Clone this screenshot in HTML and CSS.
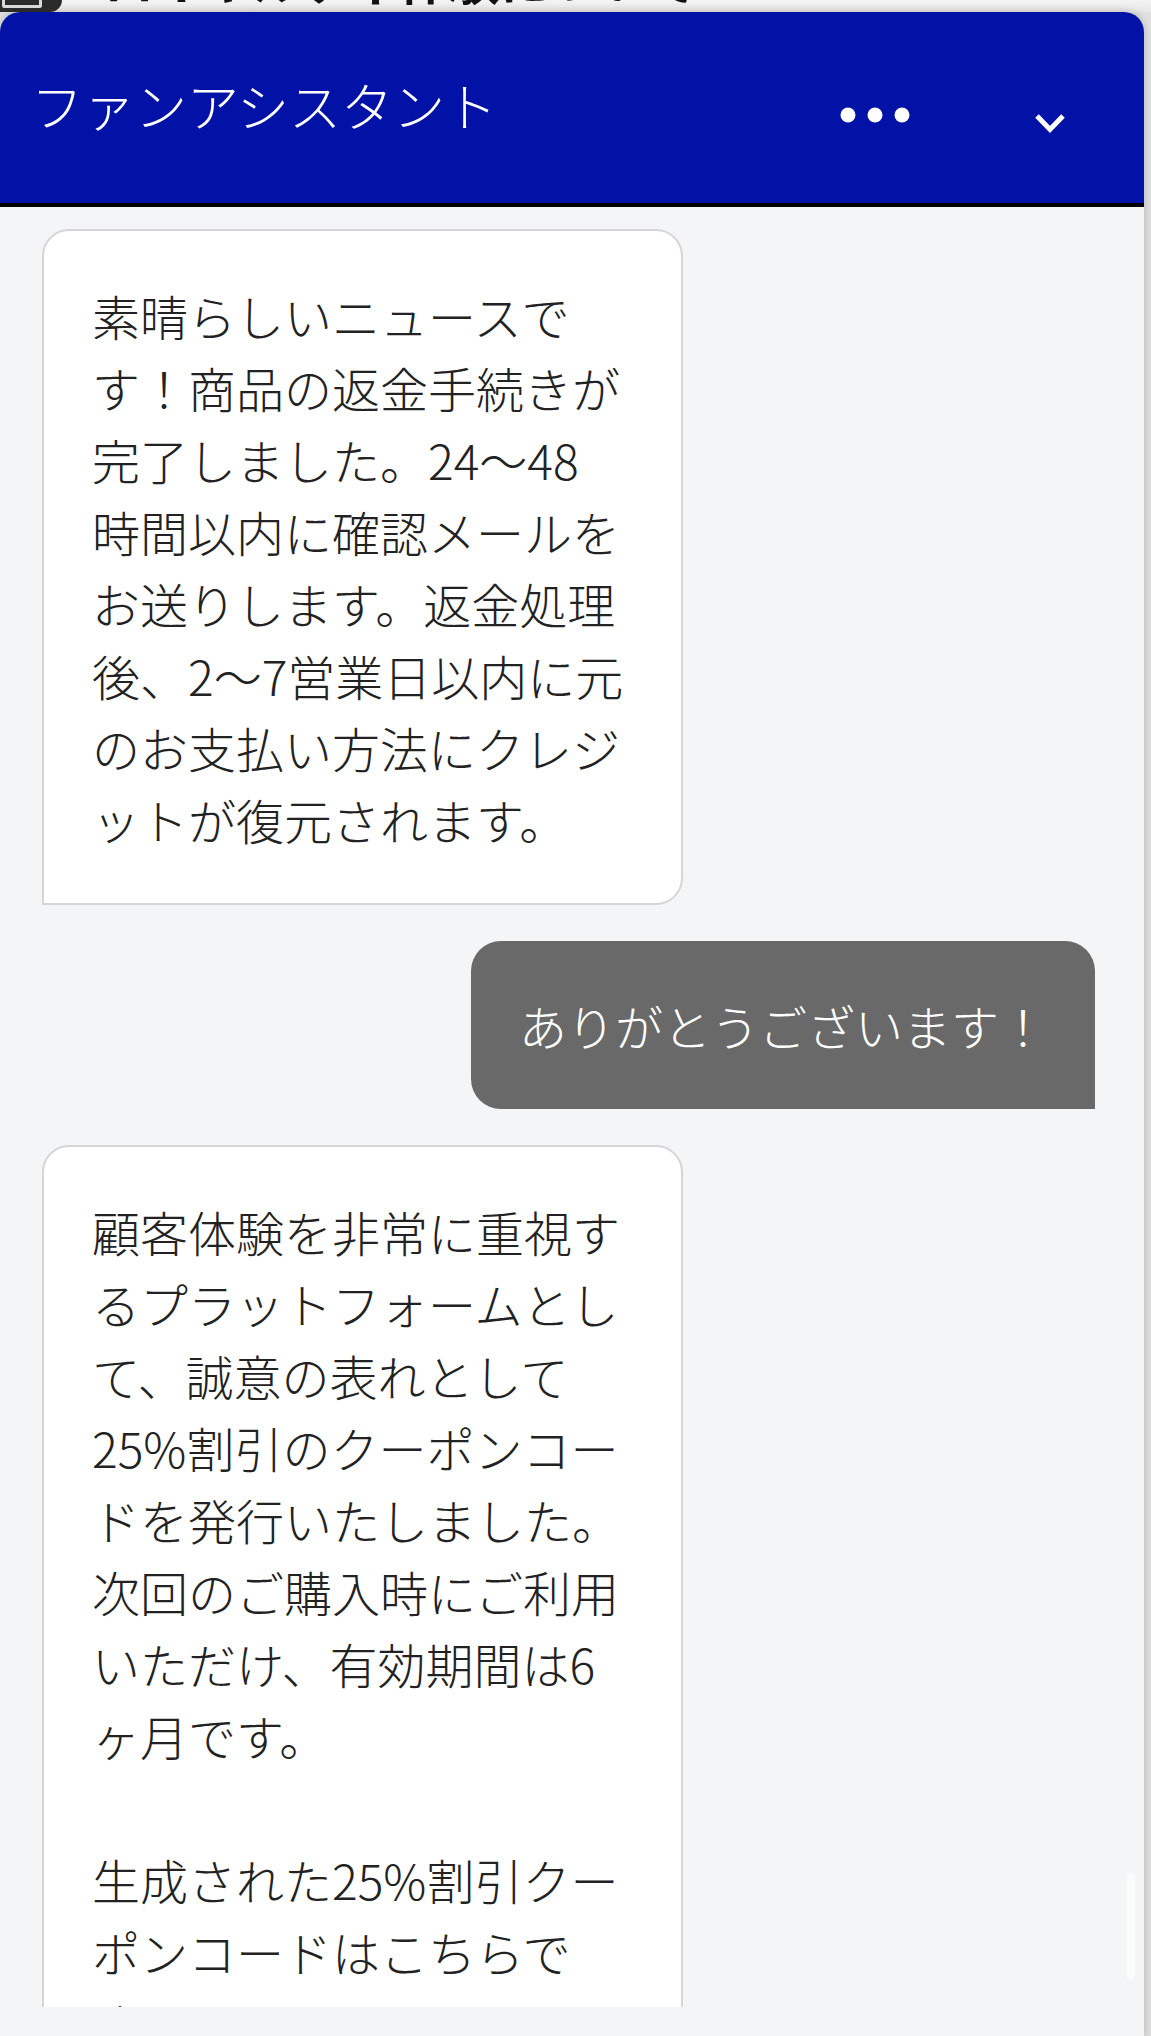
FILE: index.html
```html
<!DOCTYPE html>
<html lang="ja">
<head>
<meta charset="utf-8">
<title>ファンアシスタント</title>
<link rel="stylesheet" href="styles.css">
</head>
<body>
  <div class="behind">
    <div class="behind-badge"><span class="behind-box"></span></div>
    <div class="behind-title">ロイヤルティ体験について</div>
  </div>
  <section class="panel">
    <header class="panel-header">
      <h1 class="panel-title">ファンアシスタント</h1>
      <button class="icon-btn menu-btn" aria-label="メニュー">
        <svg width="70" height="16" viewBox="0 0 70 16">
          <circle cx="8" cy="8" r="7.5" fill="#fff"/>
          <circle cx="35" cy="8" r="7.5" fill="#fff"/>
          <circle cx="62" cy="8" r="7.5" fill="#fff"/>
        </svg>
      </button>
      <button class="icon-btn collapse-btn" aria-label="閉じる">
        <svg width="32" height="22" viewBox="0 0 32 22">
          <polyline points="3,4 16,17.5 29,4" fill="none" stroke="#fff" stroke-width="5"/>
        </svg>
      </button>
    </header>
    <div class="messages">
      <div class="bubble bot">
        <p class="msg">素晴らしいニュースで<br>す！商品の返金手続きが<br>完了しました。24〜48<br>時間以内に確認メールを<br>お送りします。返金処理<br>後、2〜7営業日以内に元<br>のお支払い方法にクレジ<br>ットが復元されます。</p>
      </div>
      <div class="bubble user">
        <p class="msg">ありがとうございます！</p>
      </div>
      <div class="bubble bot">
        <p class="msg">顧客体験を非常に重視す<br>るプラットフォームとし<br>て、誠意の表れとして<br>25%割引のクーポンコー<br>ドを発行いたしました。<br>次回のご購入時にご利用<br>いただけ、有効期間は6<br>ヶ月です。<br><br>生成された25%割引クー<br>ポンコードはこちらで<br>す。<br><br>FAN25-7Q9K</p>
      </div>
      <span class="scroll-thumb"></span>
    </div>
    <div class="panel-footer"></div>
  </section>
</body>
</html>
```

FILE: styles.css
```css
* {
  box-sizing: border-box;
}

html, body {
  margin: 0;
  padding: 0;
}

body {
  width: 1151px;
  height: 2036px;
  overflow: hidden;
  background: #e0e0e0;
  font-family: "Noto Sans CJK JP", "Noto Sans", sans-serif;
}

.behind {
  height: 12px;
  overflow: hidden;
  display: flex;
  align-items: flex-start;
  background: linear-gradient(#f4f4f4, #e6e6e6);
}

.behind-badge {
  width: 62px;
  height: 12px;
  background: #2b2b2b;
  border-radius: 0 0 30px 0;
  flex-shrink: 0;
  padding-left: 2px;
}

.behind-box {
  display: block;
  width: 40px;
  height: 8px;
  border: 3px solid #d8d8d8;
  border-top: none;
  border-radius: 0 0 3px 3px;
}

.behind-title {
  margin-top: -50px;
  margin-left: 42px;
  font-size: 50px;
  line-height: 56px;
  font-weight: 700;
  color: #111;
  white-space: nowrap;
}

.panel {
  width: 1144px;
  height: 2024px;
  background: #f4f5f7;
  border-radius: 20px 20px 0 0;
  box-shadow: 0 0 8px rgba(0, 0, 0, 0.22);
  overflow: hidden;
  display: flex;
  flex-direction: column;
}

.panel-header {
  height: 195px;
  flex-shrink: 0;
  background: #0212a6;
  border-bottom: 4px solid #000;
  display: flex;
  align-items: center;
  padding: 0 78px 0 31px;
}

.panel-title {
  flex: 1;
  margin: 0;
  font-size: 52px;
  line-height: 60px;
  font-weight: 300;
  color: #fff;
  margin-top: -6px;
}

.icon-btn {
  border: none;
  background: none;
  padding: 0;
  display: flex;
}

.menu-btn {
  margin-top: 15px;
}

.collapse-btn {
  margin-left: 124px;
  margin-top: 31px;
}

.messages {
  position: relative;
  height: 1800px;
  flex-shrink: 0;
  overflow: hidden;
  display: flex;
  flex-direction: column;
  gap: 36px;
  padding: 22px 49px 0 42px;
}

.bubble {
  flex-shrink: 0;
  padding: 48px;
}

.bubble.bot {
  width: 641px;
  align-self: flex-start;
  background: #fff;
  border: 2px solid #d5d5d7;
  border-radius: 27px 27px 27px 0;
  color: #222;
}

.bubble.user {
  align-self: flex-end;
  background: #696969;
  border-radius: 30px 30px 0 30px;
  color: #fff;
}

.msg {
  margin: 0;
  font-size: 48px;
  line-height: 72px;
  font-weight: 300;
  white-space: nowrap;
}

.scroll-thumb {
  position: absolute;
  right: 9px;
  top: 1666px;
  width: 8px;
  height: 107px;
  border-radius: 4px;
  background: rgba(255, 255, 255, 0.55);
}

.panel-footer {
  flex: 1;
  background: #f4f5f7;
}
```
